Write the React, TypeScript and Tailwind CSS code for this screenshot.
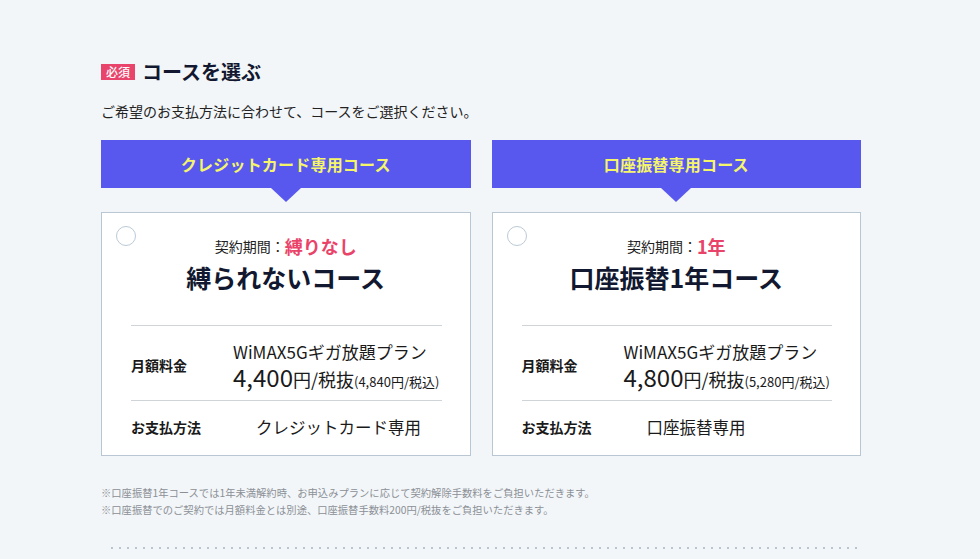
import React from "react";

type Course = {
  bar: string;
  period: string;
  title: string;
  price: string;
  taxIn: string;
  pay: string;
};

const courses: Course[] = [
  {
    bar: "クレジットカード専用コース",
    period: "縛りなし",
    title: "縛られないコース",
    price: "4,400",
    taxIn: "(4,840円/税込)",
    pay: "クレジットカード専用",
  },
  {
    bar: "口座振替専用コース",
    period: "1年",
    title: "口座振替1年コース",
    price: "4,800",
    taxIn: "(5,280円/税込)",
    pay: "口座振替専用",
  },
];

function CourseCol({ c }: { c: Course }) {
  return (
    <div className="flex flex-col">
      <div className="h-[48px] bg-[#5858ee] flex items-center justify-center">
        <span className="text-[16px] font-bold text-[#f5f56b] tracking-[0.2px]">{c.bar}</span>
      </div>
      <div className="mx-auto w-0 h-0 border-x-[15px] border-x-transparent border-t-[14px] border-t-[#5858ee]" />
      <div className="relative mt-[10px] bg-white border border-[#b9c6d3] h-[244px] flex flex-col">
        <div className="absolute left-[14px] top-[13px] w-[20px] h-[20px] rounded-full border border-[#bccad6] bg-white" />
        <div className="pt-[21px] h-[45px] flex items-center justify-center text-[#222]">
          <span className="text-[14px] leading-[24px]">契約期間：</span>
          <span className="text-[18px] font-bold leading-[24px] text-[#ea4369]">{c.period}</span>
        </div>
        <div className="mt-[3px] h-[32px] flex items-center justify-center text-[25px] leading-[32px] font-bold text-[#121830]">
          {c.title}
        </div>
        <div className="ml-[29px] mr-[28px] mt-[32px] border-t border-[#cfd4d9]">
          <div className="flex items-center h-[75px] border-b border-[#cfd4d9] pt-[4px]">
            <div className="w-[102px] text-[14px] font-bold text-[#1a1a1a]">月額料金</div>
            <div className="flex flex-col text-[#1a1a1a]">
              <div className="text-[17px] leading-[22px]">WiMAX5Gギガ放題プラン</div>
              <div className="mt-[2px] flex items-baseline leading-none">
                <span className="text-[24px] leading-none">{c.price}</span>
                <span className="text-[18px] leading-none">円/税抜</span>
                <span className="text-[13px] leading-none">{c.taxIn}</span>
              </div>
            </div>
          </div>
          <div className="flex items-center h-[53px]">
            <div className="w-[102px] text-[14px] font-bold text-[#1a1a1a]">お支払方法</div>
            <div className="pl-[23px] text-[16.5px] text-[#1a1a1a]">{c.pay}</div>
          </div>
        </div>
      </div>
    </div>
  );
}

export default function App() {
  return (
    <div
      className="w-[980px] min-h-[559px] bg-[#f3f6f9] overflow-hidden"
      style={{ fontFamily: '"Noto Sans CJK JP", "Noto Sans", sans-serif' }}
    >
      <div className="ml-[101px] w-[760px] pt-[61px]">
        <div className="flex items-center h-[22px]">
          <span className="w-[34px] h-[16px] bg-[#e9456c] text-white text-[12px] font-medium leading-[16px] flex items-center justify-center">
            必須
          </span>
          <span className="ml-[7px] text-[20px] font-bold text-[#121830] leading-[22px]">コースを選ぶ</span>
        </div>
        <p className="mt-[18px] text-[14px] leading-[20px] text-[#222]">
          ご希望のお支払方法に合わせて、コースをご選択ください。
        </p>
        <div className="mt-[19px] grid grid-cols-2 gap-[21px]">
          {courses.map((c) => (
            <CourseCol key={c.bar} c={c} />
          ))}
        </div>
        <div className="mt-[28px] text-[10.3px] leading-[17px] text-[#8b9096]">
          <p>※口座振替1年コースでは1年未満解約時、お申込みプランに応じて契約解除手数料をご負担いただきます。</p>
          <p>※口座振替でのご契約では月額料金とは別途、口座振替手数料200円/税抜をご負担いただきます。</p>
        </div>
        <div className="mt-[29px] ml-[10px] w-[748px] h-[2px] bg-[repeating-linear-gradient(to_right,#b7c5d3_0_2px,transparent_2px_8px)]" />
      </div>
    </div>
  );
}
